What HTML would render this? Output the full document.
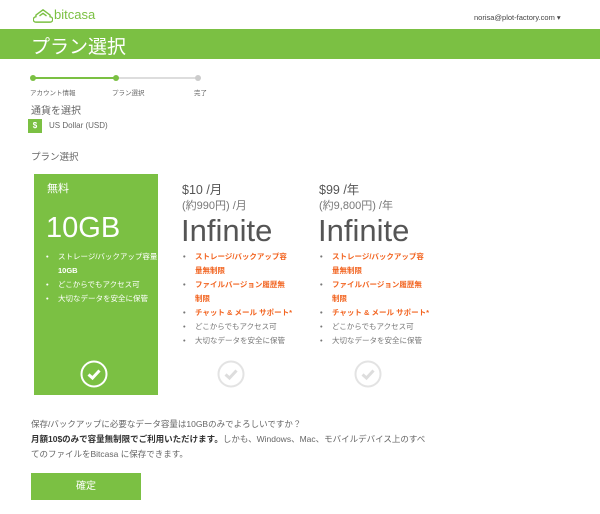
<!DOCTYPE html>
<html><head><meta charset="utf-8"><style>
*{margin:0;padding:0;box-sizing:border-box}
body{width:600px;height:514px;background:#fff;font-family:"Liberation Sans","Noto Sans CJK JP",sans-serif;color:#666;position:relative;overflow:hidden}
.a{position:absolute;white-space:nowrap}
.band{position:absolute;left:0;top:29px;width:600px;height:30px;background:#7bc043}
ul{list-style:none;position:absolute}
li{font-size:7.5px;line-height:14px;padding-left:14px;position:relative}
li:before{content:"•";position:absolute;left:2px;color:#777}
.col2 li{color:#777}
.col2 li.o{color:#f26522;font-weight:bold}
.g li:before{color:#fff}
</style></head><body>
<svg class="a" style="left:33px;top:8px" width="20" height="15" viewBox="0 0 22 17"><path d="M3 16 H19 A3 3 0 0 0 19 10 L19 8 L11 2 L3 8 L3 10 A3 3 0 0 0 3 16 Z M7 9 L11 6 L15 9" fill="none" stroke="#7bc043" stroke-width="1.6" stroke-linejoin="round"/></svg>
<div class="a" style="left:54px;top:7px;font-size:13px;color:#7bc043">bitcasa</div>
<div class="a" style="left:474px;top:13px;font-size:7.5px;color:#444">norisa@plot-factory.com ▾</div>
<div class="band"></div>
<div class="a" style="left:31px;top:32px;font-size:19px;color:#fff">プラン選択</div>
<div class="a" style="left:32px;top:77px;width:84px;height:2px;background:#7bc043"></div>
<div class="a" style="left:116px;top:77px;width:82px;height:2px;background:#ddd"></div>
<div class="a" style="left:30px;top:75px;width:6px;height:6px;border-radius:50%;background:#7bc043"></div>
<div class="a" style="left:113px;top:75px;width:6px;height:6px;border-radius:50%;background:#7bc043"></div>
<div class="a" style="left:195px;top:75px;width:6px;height:6px;border-radius:50%;background:#ccc"></div>
<div class="a" style="left:30px;top:87px;font-size:6.5px">アカウント情報</div>
<div class="a" style="left:112px;top:87px;font-size:6.5px">プラン選択</div>
<div class="a" style="left:194px;top:87px;font-size:6.5px">完了</div>
<div class="a" style="left:31px;top:102px;font-size:10px">通貨を選択</div>
<div class="a" style="left:28px;top:119px;width:14px;height:14px;background:#7bc043;color:#fff;font-size:8px;font-weight:bold;text-align:center;line-height:14px">$</div>
<div class="a" style="left:49px;top:121px;font-size:8px">US Dollar (USD)</div>
<div class="a" style="left:31px;top:149px;font-size:9.5px">プラン選択</div>

<div class="a" style="left:34px;top:174px;width:124px;height:221px;background:#7bc043"></div>
<div class="a" style="left:47px;top:180px;font-size:11px;color:#fff">無料</div>
<div class="a" style="left:46px;top:212px;font-size:29px;color:#fff">10GB</div>
<ul class="g" style="left:44px;top:250px;color:#fff"><li>ストレージ/バックアップ容量<br><b>10GB</b></li><li>どこからでもアクセス可</li><li>大切なデータを安全に保管</li></ul>
<svg class="a" style="left:80px;top:360px" width="28" height="28"><circle cx="14" cy="14" r="12.5" fill="none" stroke="#fff" stroke-width="2"/><path d="M8.5 14.5 L12.5 18 L19.5 10.5" fill="none" stroke="#fff" stroke-width="3"/></svg>

<div class="a" style="left:182px;top:179px;font-size:12.5px;color:#555">$10 /月</div>
<div class="a" style="left:182px;top:197px;font-size:11px;color:#777">(約990円) /月</div>
<div class="a" style="left:181px;top:213px;font-size:31px;color:#555">Infinite</div>
<ul class="col2" style="left:181px;top:250px"><li class="o">ストレージ/バックアップ容<br>量無制限</li><li class="o">ファイルバージョン履歴無<br>制限</li><li class="o">チャット &amp; メール サポート*</li><li>どこからでもアクセス可</li><li>大切なデータを安全に保管</li></ul>
<svg class="a" style="left:217px;top:360px" width="28" height="28"><circle cx="14" cy="14" r="12.5" fill="none" stroke="#e3e3e3" stroke-width="2"/><path d="M8.5 14.5 L12.5 18 L19.5 10.5" fill="none" stroke="#ddd" stroke-width="3"/></svg>

<div class="a" style="left:319px;top:179px;font-size:12.5px;color:#555">$99 /年</div>
<div class="a" style="left:319px;top:197px;font-size:11px;color:#777">(約9,800円) /年</div>
<div class="a" style="left:318px;top:213px;font-size:31px;color:#555">Infinite</div>
<ul class="col2" style="left:318px;top:250px"><li class="o">ストレージ/バックアップ容<br>量無制限</li><li class="o">ファイルバージョン履歴無<br>制限</li><li class="o">チャット &amp; メール サポート*</li><li>どこからでもアクセス可</li><li>大切なデータを安全に保管</li></ul>
<svg class="a" style="left:354px;top:360px" width="28" height="28"><circle cx="14" cy="14" r="12.5" fill="none" stroke="#e3e3e3" stroke-width="2"/><path d="M8.5 14.5 L12.5 18 L19.5 10.5" fill="none" stroke="#ddd" stroke-width="3"/></svg>

<div class="a" style="left:31px;top:417px;font-size:8.5px;line-height:15px;color:#666">保存/バックアップに必要なデータ容量は10GBのみでよろしいですか？<br><b style="color:#333">月額10$のみで容量無制限でご利用いただけます。</b>しかも、Windows、Mac、モバイルデバイス上のすべ<br>てのファイルをBitcasa に保存できます。</div>
<div class="a" style="left:31px;top:473px;width:110px;height:27px;background:#7bc043;color:#fff;font-size:10px;text-align:center;line-height:27px">確定</div>
</body></html>
